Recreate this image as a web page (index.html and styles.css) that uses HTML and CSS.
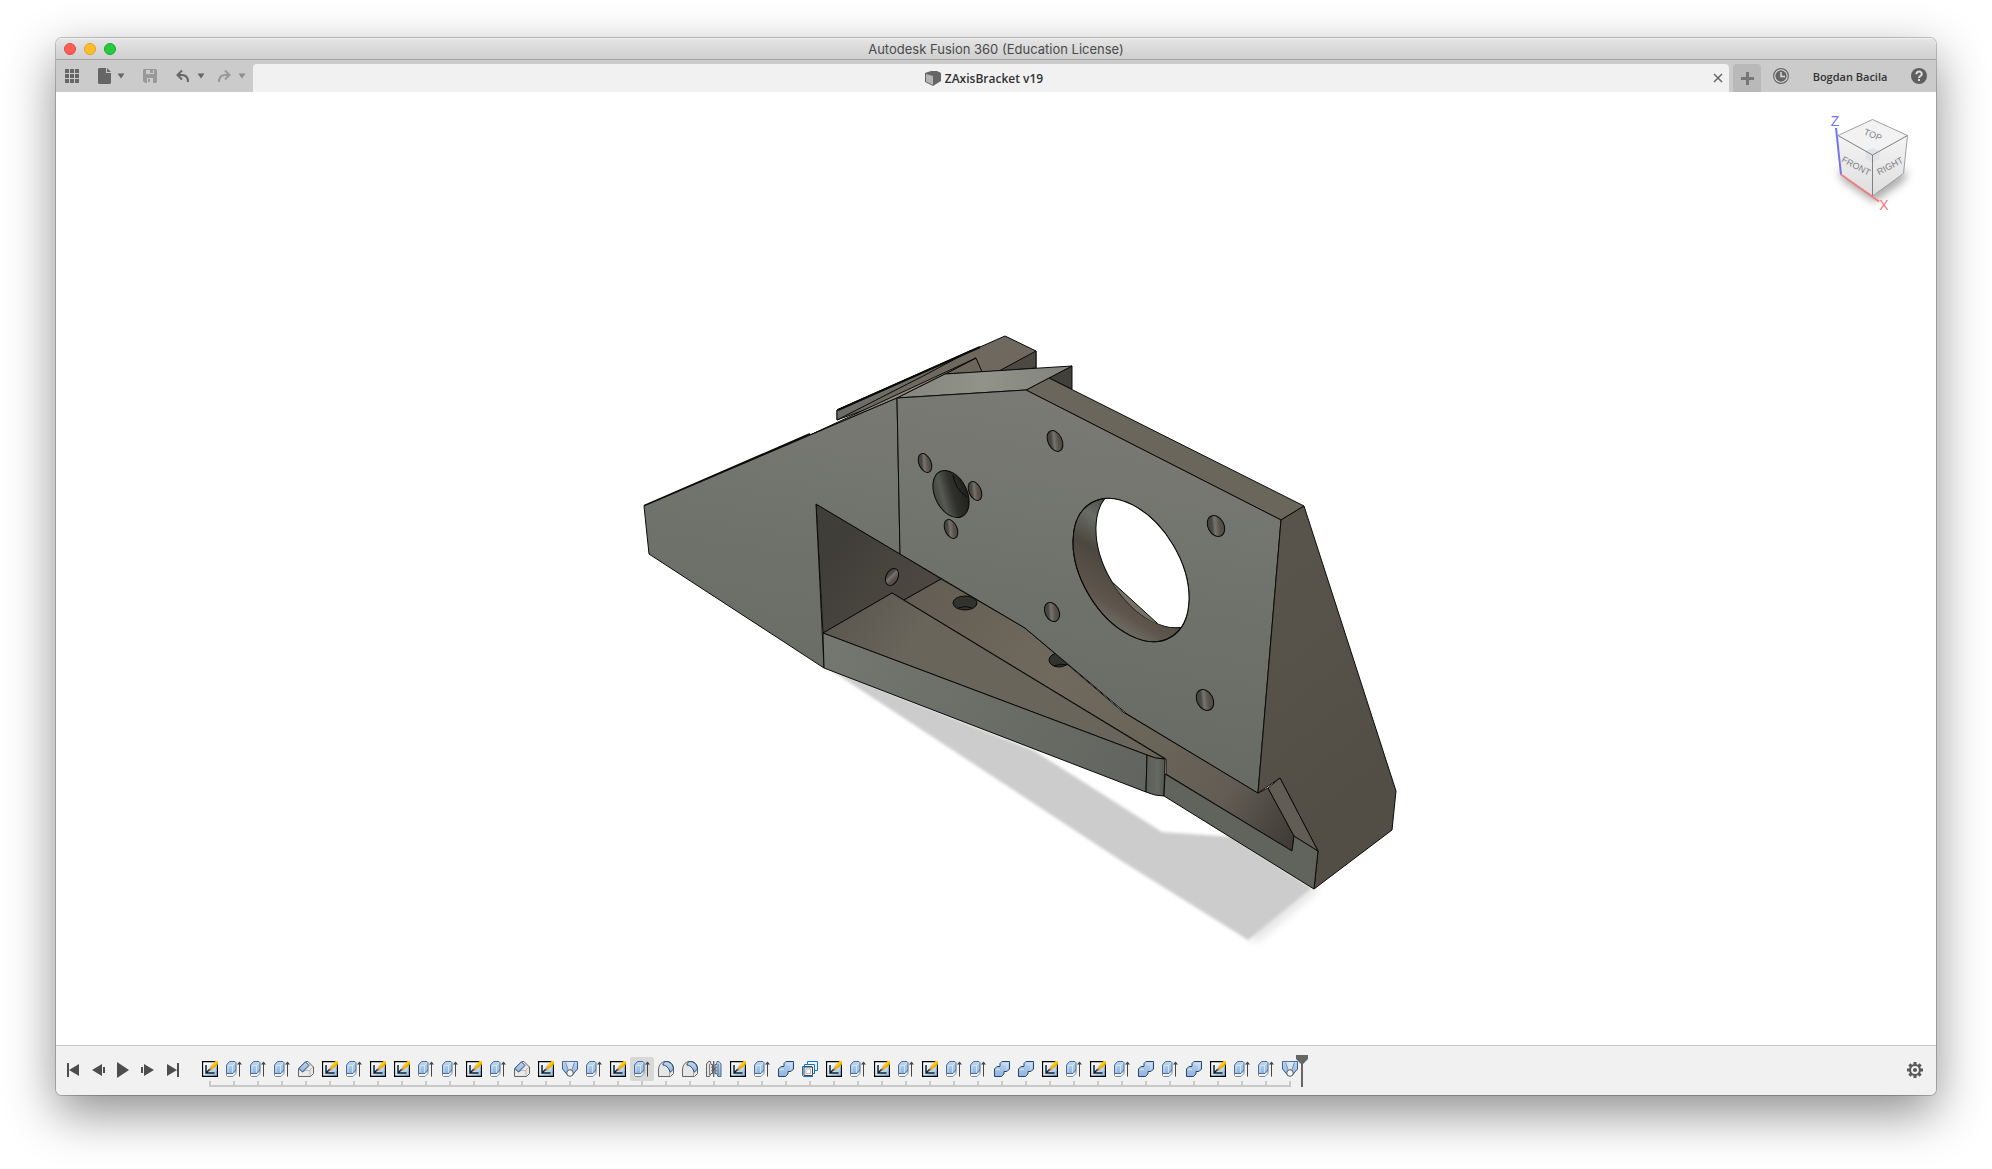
FILE: index.html
```html
<!DOCTYPE html>
<html lang="en">
<head>
<meta charset="utf-8">
<title>Autodesk Fusion 360 (Education License)</title>
<link rel="stylesheet" href="styles.css">
</head>
<body>
<svg class="defs" aria-hidden="true">
  <defs>
    <linearGradient id="blue" x1="0" y1="0" x2="0" y2="1"><stop offset="0" stop-color="#c3d8f0"/><stop offset="1" stop-color="#8fb3dc"/></linearGradient>
    <linearGradient id="paper" x1="0" y1="0" x2="1" y2="1"><stop offset="0" stop-color="#fff"/><stop offset=".4" stop-color="#e3effa"/><stop offset="1" stop-color="#7fb2de"/></linearGradient>
    <symbol id="caret" viewBox="0 0 8 6"><path d="M.5 .5h7L4 5.5z"/></symbol>
    <symbol id="sketch" viewBox="0 0 16 16">
      <path d="M.5 .5h15v15H.5z" fill="url(#paper)" stroke="#000" stroke-width="1.300"/>
      <path d="M4 4v8h8.500M4 12l3.500-3.500" fill="none" stroke="#14202e" stroke-width="1.500"/>
      <path d="M6.500 10l1.500-3.500L10 9z" fill="#8a5a30"/><path d="M7.500 7L10 4l2.500 2.500L9.500 9.300z" fill="#f1a355"/>
      <path d="M9.500 4.500L13.500 0H16v3l-4 4z" fill="#fc0"/><path d="M11 6l5-5v2l-4 4z" fill="#e9a800"/>
    </symbol>
    <symbol id="extrude" viewBox="0 0 16 16">
      <path d="M.5 12v2.500l1 1h5.500l3-3V9" fill="#f2f2f2" stroke="#888"/>
      <path d="M.5 12V4L3.500 .5h5.500l1 1V9L7 12.500H1z" fill="url(#blue)" stroke="#4a6c98"/>
      <path d="M2 11.500V4.500h4.500v7M6.500 4.500L9 2" fill="none" stroke="#dbe8f6" stroke-width=".8"/>
      <path d="M13.500 2v13.500" stroke="#444"/><path d="M11 3.500L13.500 .5 16 3.500z" fill="#444"/>
    </symbol>
    <symbol id="chamfer" viewBox="0 0 16 16">
      <path d="M.5 15.500V8L8 .5h2l5.500 5.500v6.500l-3 3z" fill="#e9e9e9" stroke="#666"/>
      <path d="M12 15V9l3.500-3.500M5 11l2-1.500h5" fill="none" stroke="#b8b8b8"/>
      <path d="M.8 7.500L7.500 .8 11 4.500 4.500 11z" fill="url(#blue)" stroke="#24466f"/>
    </symbol>
    <symbol id="hole" viewBox="0 0 16 16">
      <path d="M.5 .5h15V8l-5 6h-5l-5-6z" fill="url(#blue)" stroke="#3e5e8c"/>
      <path d="M3 1l3 8h4l3-8z" fill="#d7e5f4"/>
      <path d="M1 .5h14M3.500 1.500l2.500 7M12.500 1.500L10 8.500" fill="none" stroke="#54749f" stroke-width=".8"/>
      <circle cx="8" cy="12" r="3.300" fill="#f4f4f4" stroke="#555"/>
    </symbol>
    <symbol id="fillet" viewBox="0 0 16 16">
      <path d="M.5 15.500V8C1 3.500 4 .5 7.500 .5h3c3 1 5 4 5 7v5l-3 3z" fill="#e6e6e6" stroke="#666"/>
      <path d="M5 4C5 2 6.500 .5 8 .5c4 0 7 3 7.500 7.500l-3.500 3.500C11.500 8 9 4.500 5 4z" fill="url(#blue)" stroke="#24466f"/>
      <path d="M11.500 15v-4" stroke="#aaa"/>
    </symbol>
    <symbol id="mirror" viewBox="0 0 16 16">
      <path d="M.5 3L2.500 .5h2L5 3.500h1.500v9H5l-1.500 3h-3z" fill="#e4e4e4" stroke="#555" stroke-width=".9"/>
      <path d="M15 3L13 .5h-2l-.5 3H9v9h1.500l1.500 3h3z" fill="url(#blue)" stroke="#3e5e8c" stroke-width=".9"/>
      <path d="M7.800 0v16" stroke="#333"/><path d="M3.500 3v11M12 3v11M5 6l6 4M5 10l6-4" stroke="#555" stroke-width=".7"/>
    </symbol>
    <symbol id="combine" viewBox="0 0 16 16">
      <path d="M.5 15.500V8L3 5.500h3v-3l2-2h7.500V8L13 10.500h-3V13l-2.500 2.500z" fill="url(#blue)" stroke="#24466f"/>
      <path d="M1.500 8.500H6M8.500 3H13v5M13 3l2-2" fill="none" stroke="#d3e2f3"/>
    </symbol>
    <symbol id="pattern" viewBox="0 0 16 16">
      <path d="M5.500 .5h10v9h-3v3h-2v-6h-8v-3h3z" fill="#e8f4ff" stroke="#1673c8"/>
      <path d="M3 3.500h9.500v9M.5 5.500H10M.5 5.500v9l1 1H11" fill="none" stroke="#1673c8"/>
      <path d="M2 6h8.500v8.500H2z" fill="#f5f5f5" stroke="#444"/><path d="M4 8h4.500v4.500H4z" fill="#fff" stroke="#999" stroke-width=".7"/>
    </symbol>
  </defs>
</svg>

<main class="window">
  <header class="titlebar">
    <div class="lights">
      <button class="light light-close" aria-label="Close"></button>
      <button class="light light-min" aria-label="Minimize"></button>
      <button class="light light-max" aria-label="Zoom"></button>
    </div>
    <h1 class="title">Autodesk Fusion 360 (Education License)</h1>
  </header>

  <nav class="toolbar">
    <div class="quick">
      <button class="tool tool-grid" aria-label="Data panel"><svg width="14" height="14" fill="#666"><path d="M0 0h4v4H0zM5 0h4v4H5zM10 0h4v4h-4zM0 5h4v4H0zM5 5h4v4H5zM10 5h4v4h-4zM0 10h4v4H0zM5 10h4v4H5zM10 10h4v4h-4z"/></svg></button>
      <button class="tool tool-file" aria-label="File"><svg width="13" height="16" fill="#666"><path d="M1 0h7v5h5v10l-1 1H1l-1-1V1zM9 0l4 4H9z"/></svg><svg class="caret" width="8" height="6" fill="#666"><use href="#caret"/></svg></button>
      <button class="tool tool-save" aria-label="Save"><svg width="14" height="14"><path fill="#999" fill-rule="evenodd" d="M1 0h12l1 1v12l-1 1H2l-2-2V1zM3 1v4h8V1zM4 9v5h6V9z"/><path fill="#999" d="M7 1h3v3H7zM5 10h2v3H5z"/></svg></button>
      <button class="tool tool-undo" aria-label="Undo"><svg width="14" height="13" fill="none" stroke="#666" stroke-width="2"><path d="M2 5h4c4 0 6 3 6 7M6 .5L1.500 5 6 9.500"/></svg><svg class="caret caret-wide" width="8" height="6" fill="#666"><use href="#caret"/></svg></button>
      <button class="tool" aria-label="Redo"><svg width="14" height="13" fill="none" stroke="#999" stroke-width="2"><path d="M12 5H8c-4 0-6 3-6 7M8 .5L12.500 5 8 9.500"/></svg><svg class="caret caret-wide" width="8" height="6" fill="#8c8c8c"><use href="#caret"/></svg></button>
    </div>
    <div class="tab">
      <span class="tab-name"><svg width="16" height="15"><path d="M0 2l6-2h6l4 2v8l-8 5-8-4z" fill="#666"/><path d="M1 3l7 2v9l-7-3.500z" fill="#b5b5b5"/></svg>ZAxisBracket v19</span>
      <button class="tab-close" aria-label="Close tab"><svg width="10" height="10" stroke="#666" stroke-width="1.500"><path d="M1 1l8 8M9 1L1 9"/></svg></button>
    </div>
    <button class="tab-add" aria-label="New design"><svg width="13" height="13" fill="#777"><path d="M5 0h3v5h5v3H8v5H5V8H0V5h5z"/></svg></button>
    <div class="account">
      <button class="tool" aria-label="Job status"><svg width="16" height="16"><circle cx="8" cy="8" r="7.400" fill="#ddd" stroke="#666" stroke-width="1.200"/><circle cx="8" cy="8" r="5.700" fill="#666"/><path d="M8 4v4.500h4" fill="none" stroke="#ddd" stroke-width="1.500"/></svg></button>
      <button class="user">Bogdan Bacila</button>
      <button class="tool" aria-label="Help"><svg width="16" height="16"><circle cx="8" cy="8" r="8" fill="#5f5f5f"/><path d="M5.300 6.300C5.300 2.500 11 2.800 10.800 6c0 2-2.800 2-2.800 4" fill="none" stroke="#ddd" stroke-width="2"/><path d="M7 11h2v2H7z" fill="#ddd"/></svg></button>
    </div>
  </nav>

  <section class="viewport">
    <svg class="model" width="840" height="781" viewBox="576 178 840 781" role="img" aria-label="Z axis bracket">
      <defs>
        <linearGradient id="face" gradientUnits="userSpaceOnUse" x1="960" y1="390" x2="900" y2="790"><stop offset="0" stop-color="#787a73"/><stop offset=".5" stop-color="#6e706a"/><stop offset="1" stop-color="#666862"/></linearGradient>
        <linearGradient id="side" gradientUnits="userSpaceOnUse" x1="1250" y1="600" x2="1390" y2="780"><stop offset="0" stop-color="#58544b"/><stop offset="1" stop-color="#524e46"/></linearGradient>
        <linearGradient id="wall" gradientUnits="userSpaceOnUse" x1="825" y1="560" x2="900" y2="610"><stop offset="0" stop-color="#403e39"/><stop offset="1" stop-color="#4c4740"/></linearGradient>
        <linearGradient id="step" gradientUnits="userSpaceOnUse" x1="825" y1="610" x2="900" y2="660"><stop offset="0" stop-color="#5a554d"/><stop offset="1" stop-color="#6a655b"/></linearGradient>
        <linearGradient id="floor" gradientUnits="userSpaceOnUse" x1="920" y1="590" x2="1295" y2="840"><stop offset="0" stop-color="#635d53"/><stop offset=".35" stop-color="#706a5e"/><stop offset=".65" stop-color="#696458"/><stop offset=".82" stop-color="#625c54"/><stop offset="1" stop-color="#3e3b35"/></linearGradient>
        <linearGradient id="strip" gradientUnits="userSpaceOnUse" x1="830" y1="640" x2="1140" y2="790"><stop offset="0" stop-color="#747770"/><stop offset="1" stop-color="#62645f"/></linearGradient>
        <linearGradient id="round" x1="0" x2="1"><stop offset="0" stop-color="#5c5e59"/><stop offset=".6" stop-color="#666862"/><stop offset="1" stop-color="#545652"/></linearGradient>
        <linearGradient id="bevel" x1="0" x2="1"><stop offset="0" stop-color="#85877f"/><stop offset=".5" stop-color="#91938a"/><stop offset="1" stop-color="#81837c"/></linearGradient>
        <linearGradient id="bore" x1="0" y1=".2" x2="1" y2=".8"><stop offset="0" stop-color="#403f3a"/><stop offset=".3" stop-color="#4a4a46"/><stop offset=".45" stop-color="#77746d"/><stop offset=".65" stop-color="#5c554d"/><stop offset="1" stop-color="#46433d"/></linearGradient>
        <linearGradient id="bigbore" x1="0" y1="0" x2="1" y2=".3"><stop offset="0" stop-color="#3c3d39"/><stop offset=".35" stop-color="#555853"/><stop offset=".65" stop-color="#30302c"/><stop offset="1" stop-color="#22221f"/></linearGradient>
        <linearGradient id="ring" gradientUnits="userSpaceOnUse" x1="1085" y1="500" x2="1160" y2="645"><stop offset="0" stop-color="#35352f"/><stop offset=".2" stop-color="#4a4b46"/><stop offset=".35" stop-color="#686c65"/><stop offset=".52" stop-color="#4c473f"/><stop offset=".76" stop-color="#5f564d"/><stop offset=".92" stop-color="#777a73"/><stop offset="1" stop-color="#5a5c55"/></linearGradient>
        <clipPath id="front-rim"><ellipse cx="1131" cy="570" rx="78" ry="49" transform="rotate(59.200 1131 570)"/></clipPath>
        <clipPath id="back-rim"><ellipse cx="1153" cy="557" rx="77" ry="48" transform="rotate(59.200 1153 557)"/></clipPath>
        <filter id="soft" x="-10%" y="-10%" width="120%" height="120%"><feGaussianBlur stdDeviation="1.500"/></filter>
        <filter id="softer" x="-30%" y="-30%" width="160%" height="160%"><feGaussianBlur stdDeviation="5"/></filter>
      </defs>
      <path d="M1246 938L1312 886l8 2-62 52z" fill="#ddd" filter="url(#softer)"/>
      <path d="M826 667L1120 860l128 80 64-52-79-51-71-5-129-82z" fill="#ccc" filter="url(#soft)"/>
      <g stroke="#0a0a09" stroke-width="1" stroke-linejoin="round">
        <path d="M837 410L1005 336l31 15v17l-37 3-17 1-85 26-60 22z" fill="#6e685e"/>
        <path d="M837 410L970 351l-45 24-88 45z" fill="#6b6d66"/>
        <path d="M838 410L980 347" stroke-width="2"/>
        <path d="M1036 351v17l-37 3z" fill="#4d4942"/>
        <path d="M976 358l6 14-37 2z" fill="#6b655b"/>
        <path d="M810 435L976 358l-31 16-48 24z" fill="#918c80"/>
        <path d="M644 506L810 434" stroke-width="2"/>
        <path d="M1072 366v23l-23-11z" fill="#42403a"/>
        <path d="M1026 390l23-12 255 128-23 14z" fill="#6b665c"/>
        <path d="M897 398l48-24 127-8-46 24z" fill="url(#bevel)"/>
        <path d="M816 504l84 50 41 25-37 21-12-7-69 40z" fill="url(#wall)"/>
        <path d="M904 600l37-21 84 49 98 84 135 81 10-5 26 48-2 15-126-77v-15z" fill="url(#floor)"/>
        <path d="M823 633l69-40 273 166q-10 0-18-4z" fill="url(#step)"/>
        <ellipse cx="965" cy="603" rx="12" ry="7" fill="#32322e"/>
        <path d="M958 608q7-3 14 0" fill="none"/>
        <ellipse cx="1059" cy="660" rx="10" ry="7" fill="#32322e"/>
        <path d="M1054 666q6-3 13-1" fill="none"/>
        <path d="M644 506l253-108 3 156-84-50 8 164-175-114z" fill="url(#face)"/>
        <path d="M897 398l129-8 255 130-23 273-131-79-102-86-125-74z" fill="url(#face)"/>
        <path d="M1281 520l23-14 92 285-4 39-78 59 4-38-38-73-22 15z" fill="url(#side)"/>
        <path d="M823 633l324 122-1 37-322-124z" fill="url(#strip)"/>
        <path d="M1147 755q8 4 18 4l-1 37q-9 0-18-4z" fill="url(#round)"/>
        <path d="M1165 774l127 77 2-15 24 15-4 38-150-93z" fill="#61635d"/>
        <path d="M1268 788l12-10 38 73-24-15z" fill="#625d54"/>
        <ellipse cx="892" cy="577" rx="6" ry="9" transform="rotate(25 892 577)" fill="url(#bore)"/>
        <g fill="url(#bore)">
          <ellipse cx="925" cy="463" rx="6" ry="10" transform="rotate(-24 925 463)"/>
          <ellipse cx="975" cy="491" rx="6" ry="10" transform="rotate(-24 975 491)"/>
          <ellipse cx="951" cy="529" rx="6" ry="10" transform="rotate(-24 951 529)"/>
          <ellipse cx="1055" cy="441" rx="7" ry="11" transform="rotate(-26 1055 441)"/>
          <ellipse cx="1052" cy="612" rx="7" ry="10" transform="rotate(-26 1052 612)"/>
          <ellipse cx="1216" cy="526" rx="8" ry="11" transform="rotate(-28 1216 526)"/>
          <ellipse cx="1205" cy="700" rx="8" ry="11" transform="rotate(-28 1205 700)"/>
        </g>
        <ellipse cx="951" cy="494" rx="16" ry="25" transform="rotate(-26 951 494)" fill="url(#bigbore)"/>
        <path d="M953 475q2 14 14 22" fill="none"/>
        <ellipse cx="1131" cy="570" rx="78" ry="49" transform="rotate(59.200 1131 570)" fill="url(#ring)"/>
        <g clip-path="url(#front-rim)">
          <ellipse cx="1153" cy="557" rx="77" ry="48" transform="rotate(59.200 1153 557)" fill="#fff"/>
          <path clip-path="url(#back-rim)" d="M1111 581l46 42v10l-30-10z" fill="#777064"/>
        </g>
        <ellipse cx="1131" cy="570" rx="78" ry="49" transform="rotate(59.200 1131 570)" fill="none"/>
      </g>
    </svg>
    <svg class="viewcube" width="96" height="108" viewBox="1824 108 96 108" role="img" aria-label="View cube">
      <defs>
        <filter id="cubeshade" x="-30%" y="-30%" width="160%" height="160%"><feGaussianBlur stdDeviation="4"/></filter>
        <linearGradient id="cubeside" x1="0" y1="0" x2="0" y2="1"><stop offset="0" stop-color="#f4f4f4"/><stop offset="1" stop-color="#dedede"/></linearGradient>
      </defs>
      <path d="M1838 170l35 10 35-10-4 11-30 21-32-22z" fill="#aaa" filter="url(#cubeshade)"/>
      <path d="M1838 135.500l34.500 19.500v41L1841 174.500z" fill="url(#cubeside)"/>
      <path d="M1907.500 135.500l-35 19.500v41l31-22.500z" fill="url(#cubeside)"/>
      <path d="M1872.500 119.500l35 16-35 19.500-35-19.500z" fill="#f2f2f2"/>
      <path d="M1872.500 148l7 3v8l-7 4-7-4v-8z" fill="#dfe3e8"/>
      <path d="M1838 135.500l34.500-16 35 16-4 38-31 22.500L1841 174.500" fill="none" stroke="#a0a0a0"/>
      <path d="M1838 135.500l34.500 19.500 35-19.500M1872.500 155v41" fill="none" stroke="#808080"/>
      <path d="M1836 128l5 46.500" stroke="#7272f4" stroke-width="2"/>
      <path d="M1841 174.500L1879 201.500" stroke="#ee8080" stroke-width="2"/>
      <g class="cube-face">
        <text x="1873" y="138" transform="rotate(22 1873 135)">TOP</text>
        <text x="1856" y="169" transform="rotate(28 1856 166)">FRONT</text>
        <text x="1890" y="169" transform="rotate(-28 1890 166)">RIGHT</text>
      </g>
      <text class="axis axis-z" x="1835" y="126">Z</text>
      <text class="axis axis-x" x="1884" y="210">X</text>
    </svg>
  </section>

  <footer class="timeline">
    <div class="playback">
      <button aria-label="Go to start"><svg width="14" height="14"><path d="M1 0h2v14H1zM13 1v12L3 7z"/></svg></button>
      <button aria-label="Step back"><svg width="14" height="14"><path d="M11 1v12L1 7zM12 4h2v6h-2z"/></svg></button>
      <button aria-label="Play"><svg width="14" height="16"><path d="M1 0v16l12-8z"/></svg></button>
      <button aria-label="Step forward"><svg width="14" height="14"><path d="M3 1v12l10-6zM0 4h2v6H0z"/></svg></button>
      <button aria-label="Go to end"><svg width="14" height="14"><path d="M1 1v12l10-6zM11 0h2v14h-2z"/></svg></button>
    </div>
    <ol class="features">
      <li><button aria-label="Sketch"><svg><use href="#sketch"/></svg></button></li>
      <li><button aria-label="Extrude"><svg><use href="#extrude"/></svg></button></li>
      <li><button aria-label="Extrude"><svg><use href="#extrude"/></svg></button></li>
      <li><button aria-label="Extrude"><svg><use href="#extrude"/></svg></button></li>
      <li><button aria-label="Chamfer"><svg><use href="#chamfer"/></svg></button></li>
      <li><button aria-label="Sketch"><svg><use href="#sketch"/></svg></button></li>
      <li><button aria-label="Extrude"><svg><use href="#extrude"/></svg></button></li>
      <li><button aria-label="Sketch"><svg><use href="#sketch"/></svg></button></li>
      <li><button aria-label="Sketch"><svg><use href="#sketch"/></svg></button></li>
      <li><button aria-label="Extrude"><svg><use href="#extrude"/></svg></button></li>
      <li><button aria-label="Extrude"><svg><use href="#extrude"/></svg></button></li>
      <li><button aria-label="Sketch"><svg><use href="#sketch"/></svg></button></li>
      <li><button aria-label="Extrude"><svg><use href="#extrude"/></svg></button></li>
      <li><button aria-label="Chamfer"><svg><use href="#chamfer"/></svg></button></li>
      <li><button aria-label="Sketch"><svg><use href="#sketch"/></svg></button></li>
      <li><button aria-label="Hole"><svg><use href="#hole"/></svg></button></li>
      <li><button aria-label="Extrude"><svg><use href="#extrude"/></svg></button></li>
      <li><button aria-label="Sketch"><svg><use href="#sketch"/></svg></button></li>
      <li><button class="selected" aria-label="Extrude"><svg><use href="#extrude"/></svg></button></li>
      <li><button aria-label="Fillet"><svg><use href="#fillet"/></svg></button></li>
      <li><button aria-label="Fillet"><svg><use href="#fillet"/></svg></button></li>
      <li><button aria-label="Mirror"><svg><use href="#mirror"/></svg></button></li>
      <li><button aria-label="Sketch"><svg><use href="#sketch"/></svg></button></li>
      <li><button aria-label="Extrude"><svg><use href="#extrude"/></svg></button></li>
      <li><button aria-label="Combine"><svg><use href="#combine"/></svg></button></li>
      <li><button aria-label="Pattern"><svg><use href="#pattern"/></svg></button></li>
      <li><button aria-label="Sketch"><svg><use href="#sketch"/></svg></button></li>
      <li><button aria-label="Extrude"><svg><use href="#extrude"/></svg></button></li>
      <li><button aria-label="Sketch"><svg><use href="#sketch"/></svg></button></li>
      <li><button aria-label="Extrude"><svg><use href="#extrude"/></svg></button></li>
      <li><button aria-label="Sketch"><svg><use href="#sketch"/></svg></button></li>
      <li><button aria-label="Extrude"><svg><use href="#extrude"/></svg></button></li>
      <li><button aria-label="Extrude"><svg><use href="#extrude"/></svg></button></li>
      <li><button aria-label="Combine"><svg><use href="#combine"/></svg></button></li>
      <li><button aria-label="Combine"><svg><use href="#combine"/></svg></button></li>
      <li><button aria-label="Sketch"><svg><use href="#sketch"/></svg></button></li>
      <li><button aria-label="Extrude"><svg><use href="#extrude"/></svg></button></li>
      <li><button aria-label="Sketch"><svg><use href="#sketch"/></svg></button></li>
      <li><button aria-label="Extrude"><svg><use href="#extrude"/></svg></button></li>
      <li><button aria-label="Combine"><svg><use href="#combine"/></svg></button></li>
      <li><button aria-label="Extrude"><svg><use href="#extrude"/></svg></button></li>
      <li><button aria-label="Combine"><svg><use href="#combine"/></svg></button></li>
      <li><button aria-label="Sketch"><svg><use href="#sketch"/></svg></button></li>
      <li><button aria-label="Extrude"><svg><use href="#extrude"/></svg></button></li>
      <li><button aria-label="Extrude"><svg><use href="#extrude"/></svg></button></li>
      <li><button aria-label="Hole"><svg><use href="#hole"/></svg></button></li>
    </ol>
    <svg class="marker" width="12" height="32" fill="#666"><path d="M0 0h12v4L7 9v23H5V9L0 4z"/></svg>
    <button class="settings" aria-label="Timeline settings"><svg width="16" height="16" viewBox="-8 -8 16 16"><g fill="#595959"><circle r="6"/><path id="cog" d="M-1.500-8h3v16h-3z"/><use href="#cog" transform="rotate(45)"/><use href="#cog" transform="rotate(90)"/><use href="#cog" transform="rotate(135)"/></g><circle r="3" fill="#595959" stroke="#f1f1f1" stroke-width="1.800"/></svg></button>
  </footer>
</main>
</body>
</html>
```

FILE: styles.css
```css
* {
  box-sizing: border-box;
}

body {
  display: flex;
  min-height: 100vh;
  margin: 0;
  padding: 38px 56px 74px;
  background: #fff;
  font-family: "Open Sans", "Noto Sans", sans-serif;
  font-size: 12px;
  color: #333;
}

button {
  display: flex;
  align-items: center;
  justify-content: center;
  padding: 0;
  border: 0;
  background: none;
  font: inherit;
  color: inherit;
}

svg {
  display: block;
  flex: none;
}

.defs {
  position: absolute;
  width: 0;
  height: 0;
}

.window {
  display: flex;
  flex: 1;
  flex-direction: column;
  min-width: 0;
  overflow: hidden;
  border-radius: 6px;
  background: #fff;
  box-shadow: 0 0 0 1px rgba(0, 0, 0, 0.22), 0 18px 50px rgba(0, 0, 0, 0.45);
}

/* Title bar */
.titlebar {
  display: grid;
  grid-template-columns: 1fr auto 1fr;
  align-items: center;
  height: 22px;
  padding: 0 8px;
  border-top: 1px solid #f4f4f4;
  border-bottom: 1px solid #a6a6a6;
  background: linear-gradient(#e4e4e4, #cfcfcf);
}

.lights {
  display: flex;
  gap: 8px;
}

.light {
  width: 12px;
  height: 12px;
  border: 1px solid #e2463f;
  border-radius: 50%;
  background: #ff5f57;
}

.light-min {
  border-color: #e1a116;
  background: #ffbd2e;
}

.light-max {
  border-color: #12ac28;
  background: #28ca41;
}

.title {
  margin: 0;
  font: 400 13px/20px Inter, sans-serif;
  color: #4a4a4a;
}

/* Toolbar and document tabs */
.toolbar {
  display: flex;
  height: 32px;
  background: #cbcbcb;
}

.quick {
  display: flex;
  align-items: center;
  width: 197px;
  padding-left: 9px;
}

.tool-grid {
  margin-right: 19px;
}

.tool-file {
  margin-right: 18px;
}

.tool-save {
  margin-right: 19px;
}

.tool-undo {
  margin-right: 12px;
}

.caret {
  margin-left: 6px;
}

.caret-wide {
  margin-left: 7px;
}

.tab {
  display: flex;
  flex: 1;
  align-items: center;
  margin-top: 4px;
  padding: 0 6px;
  border-radius: 4px 4px 0 0;
  background: #f1f1f1;
}

.tab-name {
  display: flex;
  flex: 1;
  align-items: center;
  justify-content: center;
  gap: 4px;
  padding-right: 4px;
  font-weight: 600;
}

.tab-add {
  width: 28px;
  margin: 4px 0 0 4px;
  border-radius: 4px 4px 0 0;
  background: #b9b9b9;
}

.account {
  display: flex;
  align-items: center;
  justify-content: space-between;
  width: 175px;
  padding: 0 9px 0 12px;
}

.user {
  margin: 0 16px;
  font-size: 11px;
  font-weight: 600;
}

/* Model view */
.viewport {
  position: relative;
  display: flex;
  flex: 1;
  align-items: center;
  justify-content: center;
}

.viewcube {
  position: absolute;
  top: 16px;
  right: 16px;
}

.cube-face {
  font: 400 9px "Liberation Sans", sans-serif;
  fill: #7d8186;
  text-anchor: middle;
}

.axis {
  font: 400 14px "Liberation Sans", sans-serif;
  text-anchor: middle;
}

.axis-z {
  fill: #7272ff;
}

.axis-x {
  fill: #ff7272;
}

/* Timeline */
.timeline {
  display: flex;
  height: 50px;
  padding: 0 13px 0 4px;
  border-top: 1px solid #c6c6c6;
  background: #f1f1f1;
}

.playback {
  display: flex;
  height: 47px;
  margin-right: 13px;
  fill: #4d4d4d;
}

.playback button {
  width: 25px;
}

.features {
  display: flex;
  margin: 11px 0 0;
  padding: 0;
  list-style: none;
}

.features li {
  width: 24px;
}

.features button {
  width: 24px;
  height: 24px;
  border-radius: 2px;
}

.features .selected {
  background: #d8d8d8;
}

.features svg {
  width: 16px;
  height: 16px;
}

.features li::after {
  content: "";
  display: block;
  height: 6px;
  background:
    linear-gradient(#c8c8c8, #c8c8c8) center top / 2px 6px no-repeat,
    linear-gradient(#c8c8c8, #c8c8c8) center bottom / 100% 2px no-repeat;
}

.features li:first-child::after {
  margin-left: 11px;
  background-position: left top, left bottom;
}

.features li:last-child::after {
  margin-right: 11px;
  background-position: right top, right bottom;
}

.marker {
  margin: 9px 0 0 -6px;
}

.settings {
  height: 47px;
  margin-left: auto;
}
```
